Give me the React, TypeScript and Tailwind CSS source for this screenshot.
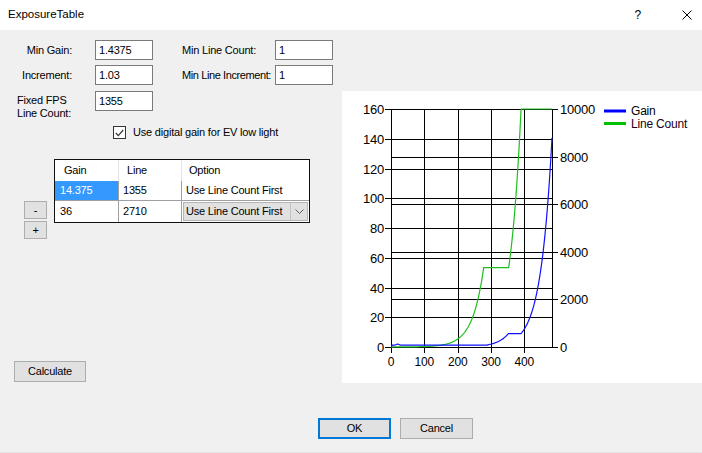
const font = "font-['Liberation_Sans',Arial,sans-serif]";

const L = 49;
const R = 210;
const T = 18;
const B = 256;
const leftY = (v: number) => B - (v / 160) * (B - T);
const rightY = (v: number) => B - (v / 10000) * (B - T);
const px = (d: number) => L + d / 3;

function gainAt(d: number) {
  if (d < 290) return 1.2 + 0.7 * Math.exp(-(((d - 20) / 6) ** 2)) - (d < 4 ? 0.4 : 0);
  if (d < 390) return Math.min(1.4375 * Math.pow(1.03, d - 290), 9);
  return 9 * Math.pow(1.03, d - 390);
}

function lineAt(d: number) {
  if (d <= 278) return 0.9 * Math.pow(1.03, d);
  if (d <= 353) return 0.9 * Math.pow(1.03, 278);
  return Math.min(0.9 * Math.pow(1.03, 278) * Math.pow(1.03, d - 353), 10000);
}

const pts = (fn: (d: number) => number, y: (v: number) => number) =>
  Array.from({ length: 484 }, (_, d) => `${px(d).toFixed(2)},${y(fn(d)).toFixed(2)}`).join(" ");

function Chart() {
  const lv = [0, 20, 40, 60, 80, 100, 120, 140, 160];
  const rv = [0, 2000, 4000, 6000, 8000, 10000];
  const xv = [0, 100, 200, 300, 400];
  const h = (y: number) => Math.round(y) + 0.5;
  return (
    <svg width="360" height="292" className="block" fontFamily="'Liberation Sans', Arial, sans-serif">
      <g stroke="#000" strokeWidth="1" shapeRendering="crispEdges">
        {lv.map((v) => (
          <line key={"l" + v} x1={L - 6} x2={R} y1={h(leftY(v))} y2={h(leftY(v))} />
        ))}
        {rv.map((v) => (
          <line key={"r" + v} x1={L} x2={R + 6} y1={h(rightY(v))} y2={h(rightY(v))} />
        ))}
        {xv.map((d) => (
          <line key={"x" + d} x1={h(px(d))} x2={h(px(d))} y1={h(T)} y2={h(B) + 5} />
        ))}
        <line x1={h(R)} x2={h(R)} y1={h(T)} y2={h(B)} />
      </g>
      <g fontSize="13" fill="#000">
        {lv.map((v) => (
          <text key={"lt" + v} x={L - 7} y={leftY(v) + 5} textAnchor="end">
            {v}
          </text>
        ))}
        {rv.map((v) => (
          <text key={"rt" + v} x={R + 8} y={rightY(v) + 5}>
            {v}
          </text>
        ))}
      </g>
      <g fontSize="12" fill="#000">
        {xv.map((d) => (
          <text key={"xt" + d} x={px(d)} y={275} textAnchor="middle">
            {d}
          </text>
        ))}
      </g>
      <polyline points={pts(lineAt, rightY)} fill="none" stroke="#1fbf1f" strokeWidth="1.2" />
      <polyline points={pts(gainAt, leftY)} fill="none" stroke="#1010ff" strokeWidth="1.2" />
      <rect x="262" y="18.5" width="22" height="3" fill="#0000ff" />
      <text x="289" y="24" fontSize="12" fill="#000">Gain</text>
      <rect x="262" y="31" width="22" height="3" fill="#00c000" />
      <text x="289" y="37" fontSize="12" fill="#200020">Line Count</text>
    </svg>
  );
}

function Field({ value }: { value: string }) {
  return (
    <div className="w-[58px] h-[20px] bg-white border border-[#7a7a7a] pl-[3px] leading-[18px]">{value}</div>
  );
}

function Btn({ label, className }: { label: string; className: string }) {
  return (
    <div className={`flex items-center justify-center bg-[#e1e1e1] border border-[#adadad] ${className}`}>{label}</div>
  );
}

export default function App() {
  return (
    <div className={`w-[702px] h-[453px] overflow-hidden flex flex-col text-[11px] tracking-[-0.2px] text-black ${font}`}>
      <div className="h-[30px] bg-white flex items-center shrink-0">
        <span className="ml-[8px] text-[11.5px] tracking-normal">ExposureTable</span>
        <span className="ml-auto text-[12px] mr-[41px]">?</span>
        <svg width="10" height="10" className="mr-[10px]" viewBox="0 0 10 10">
          <path d="M0.5 0.5 L9.5 9.5 M9.5 0.5 L0.5 9.5" stroke="#000" strokeWidth="1" />
        </svg>
      </div>

      <div className="flex-1 bg-[#f0f0f0] border-b border-[#e4e4e4] flex flex-col">
        <div className="flex h-[353px]">
          <div className="w-[342px] flex flex-col">
            <div className="mt-[10px] h-[20px] flex items-center">
              <span className="w-[72px] text-right">Min Gain:</span>
              <div className="ml-[23px]">
                <Field value="1.4375" />
              </div>
              <span className="ml-[29px] w-[93px] whitespace-nowrap">Min Line Count:</span>
              <Field value="1" />
            </div>
            <div className="mt-[5px] h-[20px] flex items-center">
              <span className="w-[72px] text-right">Increment:</span>
              <div className="ml-[23px]">
                <Field value="1.03" />
              </div>
              <span className="ml-[29px] w-[93px] whitespace-nowrap tracking-[-0.4px]">Min Line Increment:</span>
              <Field value="1" />
            </div>
            <div className="mt-[6px] h-[29px] flex items-start">
              <span className="pl-[17px] w-[72px] mt-[3px] leading-[13px] whitespace-nowrap">
                Fixed FPS
                <br />
                Line Count:
              </span>
              <div className="ml-[23px]">
                <Field value="1355" />
              </div>
            </div>
            <div className="mt-[6px] h-[13px] flex items-center pl-[113px]">
              <div className="w-[13px] h-[13px] border border-[#333] bg-white flex items-center justify-center">
                <svg width="9" height="8" viewBox="0 0 9 8">
                  <path d="M0.8 4 L3.3 6.6 L8.2 1" fill="none" stroke="#333" strokeWidth="1.2" />
                </svg>
              </div>
              <span className="ml-[7px]">Use digital gain for EV low light</span>
            </div>

            <div className="mt-[20px] flex items-start">
              <div className="ml-[24px] mt-[42px] w-[23px] flex flex-col gap-[2px]">
                <Btn label="-" className="h-[18px]" />
                <Btn label="+" className="h-[18px]" />
              </div>
              <div className="ml-[7px] w-[256px] border border-[#111] bg-white">
                <div className="grid grid-cols-[64px_63px_127px] h-[21px]">
                  <div className="pl-[9px] leading-[21px] border-r border-[#e3e3e3]">Gain</div>
                  <div className="pl-[8px] leading-[21px] border-r border-[#e3e3e3]">Line</div>
                  <div className="pl-[7px] leading-[21px]">Option</div>
                </div>
                <div className="grid grid-cols-[64px_63px_127px] h-[20px] border-b border-[#a0a0a0]">
                  <div className="pl-[5px] leading-[19px] bg-[#3399ff] text-white border-r border-[#a0a0a0]">14.375</div>
                  <div className="pl-[4px] leading-[19px] border-r border-[#a0a0a0]">1355</div>
                  <div className="pl-[4px] leading-[19px]">Use Line Count First</div>
                </div>
                <div className="grid grid-cols-[64px_63px_127px] h-[21px]">
                  <div className="pl-[5px] leading-[20px] border-r border-[#a0a0a0]">36</div>
                  <div className="pl-[4px] leading-[20px] border-r border-[#a0a0a0]">2710</div>
                  <div className="p-[1px]">
                    <div className="h-full bg-[#e1e1e1] border border-[#b5b5b5] flex items-center">
                      <span className="pl-[2px] flex-1 whitespace-nowrap">Use Line Count First</span>
                      <div className="w-[17px] h-full border-l border-[#c4c4c4] flex items-center justify-center">
                        <svg width="9" height="5" viewBox="0 0 9 5">
                          <path d="M0.5 0.5 L4.5 4.5 L8.5 0.5" fill="none" stroke="#606060" strokeWidth="1" />
                        </svg>
                      </div>
                    </div>
                  </div>
                </div>
              </div>
            </div>

            <div className="mt-auto mb-[1px] ml-[14px]">
              <Btn label="Calculate" className="w-[72px] h-[21px]" />
            </div>
          </div>
          <div className="mt-[61px] w-[360px] h-[292px] bg-white">
            <Chart />
          </div>
        </div>

        <div className="mt-[35px] flex pl-[318px] gap-[9px]">
          <div className="w-[73px] h-[21px] border-2 border-[#0078d7] bg-[#e1e1e1] flex items-center justify-center">
            OK
          </div>
          <Btn label="Cancel" className="w-[73px] h-[21px]" />
        </div>
      </div>
    </div>
  );
}
